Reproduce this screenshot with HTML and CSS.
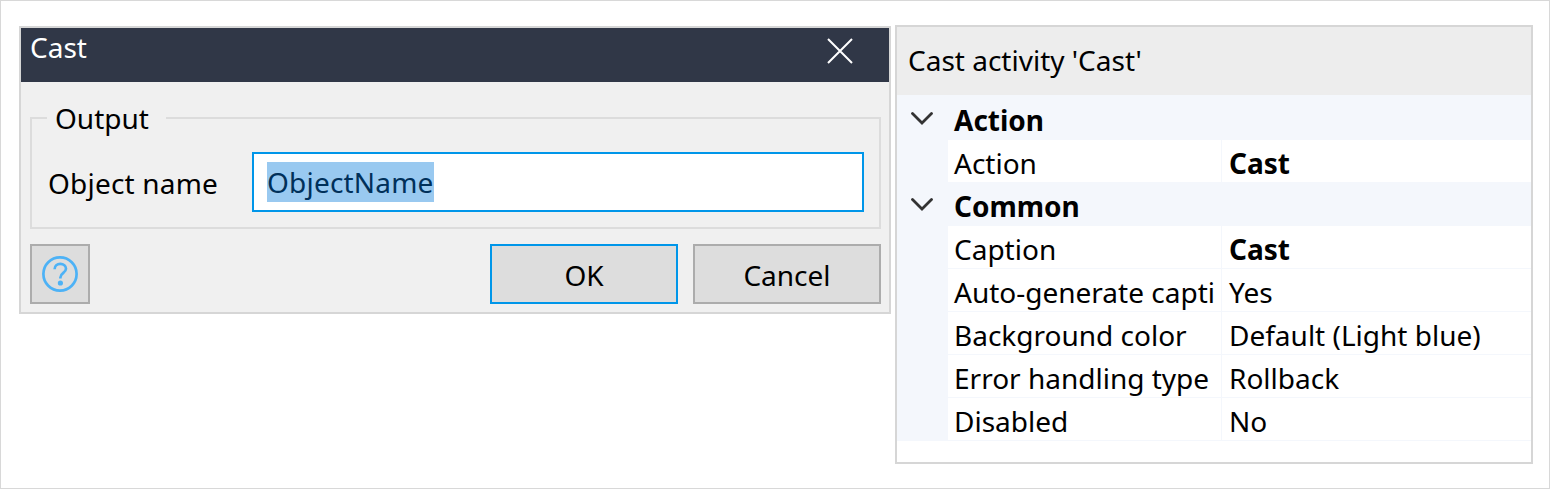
FILE: index.html
```html
<!DOCTYPE html>
<html>
<head>
    <title>Cast activity</title>
    <link rel="stylesheet" href="styles.css">
</head>
<body>
    <div class="frame">
        <div class="dialog">
            <div class="title-bar">
                <span class="title-text">Cast</span>
                <svg class="close-icon" width="26" height="26" viewBox="0 0 26 26">
                    <path d="M1 1 L25 25 M25 1 L1 25" />
                </svg>
            </div>
            <div class="dialog-body">
                <fieldset class="group-box">
                    <legend>Output</legend>
                    <div class="field">
                        <label class="field-label">Object name</label>
                        <div class="text-input"><span class="selected-text">ObjectName</span></div>
                    </div>
                </fieldset>
                <div class="button-row">
                    <button class="btn btn-help" type="button">
                        <svg width="36" height="36" viewBox="0 0 36 36">
                            <circle cx="18" cy="18" r="16.6" class="help-ring" />
                            <path d="M12.6 13.2 C12.6 9.6 15.2 7.9 18.3 7.9 C21.5 7.9 24 9.9 24 12.8 C24 16.8 18.4 17 18.4 21.4 V22.4" class="help-mark" />
                            <circle cx="18.4" cy="27" r="2.6" class="help-dot" />
                        </svg>
                    </button>
                    <button class="btn btn-ok" type="button"><span class="btn-text">OK</span></button>
                    <button class="btn" type="button"><span class="btn-text">Cancel</span></button>
                </div>
            </div>
        </div>

        <div class="properties">
            <div class="properties-title">Cast activity 'Cast'</div>

            <div class="prop-group">
                <svg class="chevron" width="22" height="13" viewBox="0 0 22 13"><path d="M1.5 1.5 L11 11 L20.5 1.5" /></svg>
                <span>Action</span>
            </div>
            <div class="prop-row">
                <div class="prop-name">Action</div>
                <div class="prop-value strong">Cast</div>
            </div>

            <div class="prop-group">
                <svg class="chevron" width="22" height="13" viewBox="0 0 22 13"><path d="M1.5 1.5 L11 11 L20.5 1.5" /></svg>
                <span>Common</span>
            </div>
            <div class="prop-row">
                <div class="prop-name">Caption</div>
                <div class="prop-value strong">Cast</div>
            </div>
            <div class="prop-row">
                <div class="prop-name">Auto-generate capti</div>
                <div class="prop-value">Yes</div>
            </div>
            <div class="prop-row">
                <div class="prop-name">Background color</div>
                <div class="prop-value">Default (Light blue)</div>
            </div>
            <div class="prop-row">
                <div class="prop-name">Error handling type</div>
                <div class="prop-value">Rollback</div>
            </div>
            <div class="prop-row">
                <div class="prop-name">Disabled</div>
                <div class="prop-value">No</div>
            </div>
        </div>
    </div>
</body>
</html>
```

FILE: styles.css
```css
* {
    box-sizing: border-box;
}

html, body {
    margin: 0;
    height: 100%;
}

body {
    font-family: "Noto Sans", Arial, sans-serif;
    font-size: 28px;
    color: #000;
    background-color: #fff;
}

.frame {
    display: flex;
    align-items: flex-start;
    gap: 4px;
    width: 1550px;
    height: 489px;
    padding: 24px 0 0 18px;
    border: 1px solid #d8d8d8;
}

/* dialog */
.dialog {
    width: 872px;
    margin-top: 1px;
    border: 2px solid #d6d6d6;
    background-color: #f0f0f0;
}

.title-bar {
    display: flex;
    align-items: center;
    justify-content: space-between;
    height: 54px;
    padding: 0 36px 16px 9px;
    background-color: #303747;
    color: #fff;
}

.close-icon {
    margin-top: 8px;
}

.close-icon path {
    fill: none;
    stroke: #fff;
    stroke-width: 2;
}

.dialog-body {
    padding: 18px 8px 8px 9px;
}

.group-box {
    margin: 0;
    padding: 0 15px 15px 16px;
    border: 2px solid #dcdcdc;
}

.group-box legend {
    height: 36px;
    margin-left: -1px;
    padding: 0 17px 0 8px;
    line-height: 36px;
}

.field {
    display: flex;
    align-items: center;
    margin-top: 16px;
    letter-spacing: 0.2px;
}

.field-label {
    width: 204px;
    padding-top: 2px;
}

.text-input {
    display: flex;
    align-items: center;
    flex: 1;
    height: 60px;
    padding-left: 13px;
    border: 2px solid #0096e9;
    background-color: #fff;
}

.selected-text {
    line-height: 40px;
    background-color: #99c9f0;
    color: #00305a;
}

.button-row {
    display: flex;
    gap: 15px;
    margin-top: 15px;
}

.btn {
    width: 188px;
    height: 60px;
    padding: 0;
    border: 2px solid #acacac;
    background-color: #dddddd;
    color: #000;
    font-family: inherit;
    font-size: inherit;
}

.btn-text {
    position: relative;
    top: 1px;
}

.btn-help {
    display: flex;
    align-items: center;
    justify-content: center;
    width: 60px;
    margin-right: auto;
}

.btn-ok {
    border-color: #0096e9;
}

.help-ring, .help-mark {
    fill: none;
    stroke: #4db2f6;
    stroke-width: 2.7;
}

.help-dot {
    fill: #4db2f6;
}

/* properties panel */
.properties {
    width: 638px;
    height: 439px;
    border: 2px solid #d6d6d6;
    background-color: #fff;
}

.properties-title {
    height: 70px;
    padding-left: 11px;
    line-height: 66px;
    background-color: #ededed;
    border-bottom: 2px solid #f4f7fc;
}

.prop-group {
    display: flex;
    align-items: center;
    height: 43px;
    padding-left: 14px;
    background-color: #f4f7fc;
    font-weight: bold;
}

.prop-group span {
    margin-left: 21px;
    padding-top: 2px;
}

.chevron path {
    fill: none;
    stroke: #333;
    stroke-width: 2.8;
    stroke-linecap: round;
}

.prop-row {
    display: grid;
    grid-template-columns: 274px 1fr;
    height: 43px;
    padding-left: 51px;
    background: linear-gradient(#f4f7fc, #f4f7fc) left / 51px 100% no-repeat, #fff;
    line-height: 46px;
}

.prop-name, .prop-value {
    border-bottom: 1px solid #f4f7fc;
    overflow: hidden;
    white-space: nowrap;
}

.prop-name {
    padding-left: 6px;
    border-right: 1px solid #f4f7fc;
}

.prop-value {
    padding-left: 7px;
}

.strong {
    font-weight: bold;
}
```
